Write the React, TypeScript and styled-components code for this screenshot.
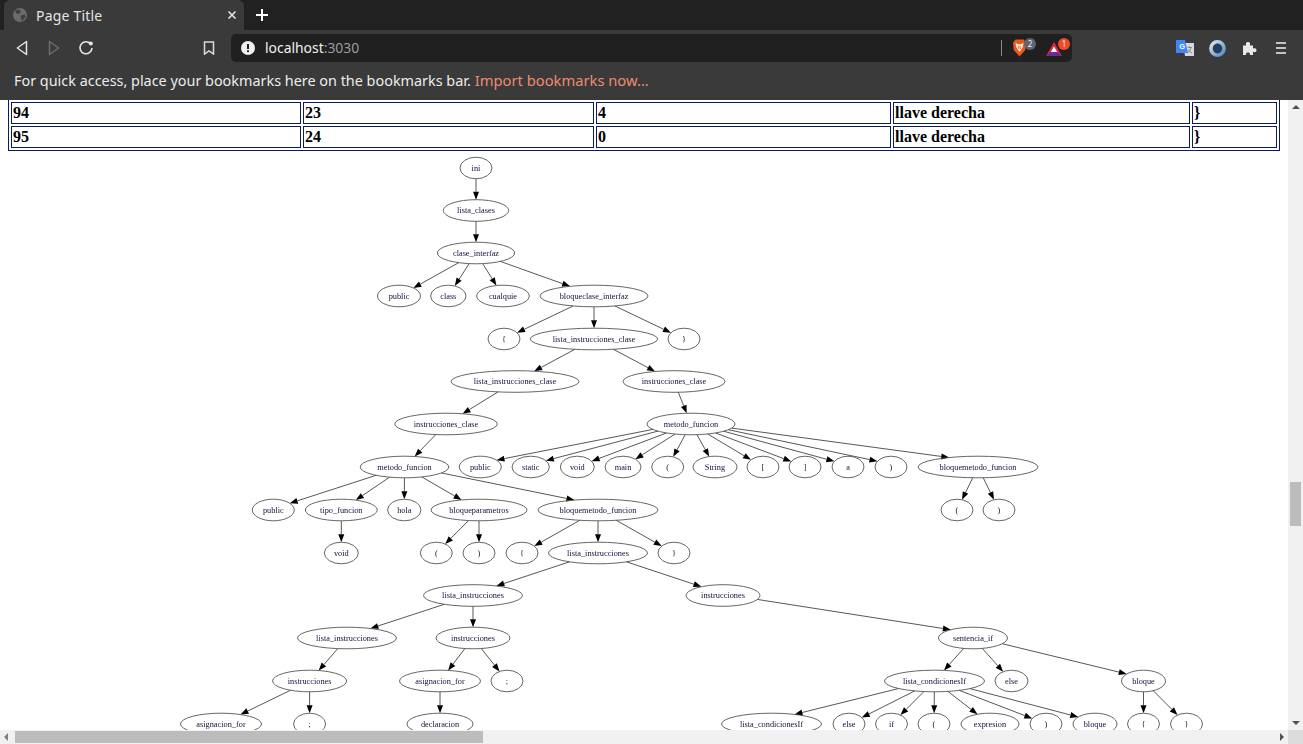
import React from 'react'
import styled, { createGlobalStyle } from 'styled-components'

const GlobalStyle = createGlobalStyle`
  html, body {
    margin: 0;
    height: 744px;
    overflow: hidden;
    background: #fff;
  }
`

const Window = styled.div`
  width: 1303px;
  height: 744px;
  display: flex;
  flex-direction: column;
  font-family: 'Noto Sans', sans-serif;
`

/* browser chrome */
const TabStrip = styled.div`
  height: 30px;
  background: #212121;
  display: flex;
  padding-left: 4px;
`
const Tab = styled.div`
  width: 240px;
  box-sizing: border-box;
  background: #3a3a3a;
  border-radius: 6px 6px 0 0;
  display: flex;
  align-items: center;
  padding: 0 7px 0 8px;
  gap: 8px;
  color: #e4e4e4;
  font-size: 14px;
`
const TabTitle = styled.span`
  flex: 1;
  letter-spacing: 0.2px;
`
const NewTab = styled.div`
  width: 36px;
  display: flex;
  align-items: center;
  justify-content: center;
`
const Toolbar = styled.div`
  height: 36px;
  background: #3a3a3a;
  display: flex;
  align-items: center;
  padding: 0 6px;
`
const ToolButton = styled.div<{ $gapLeft?: number }>`
  width: 32px;
  height: 32px;
  flex: none;
  display: flex;
  align-items: center;
  justify-content: center;
  margin-left: ${p => p.$gapLeft ?? 0}px;
  color: #e6e6e6;
`
const AddressBar = styled.div`
  flex: 1;
  height: 28px;
  margin: 0 97px 0 6px;
  padding-left: 10px;
  background: #202020;
  border-radius: 5px;
  display: flex;
  align-items: center;
  font-size: 13.9px;
`
const Host = styled.span`
  margin-left: 10px;
  padding-bottom: 2px;
  color: #f0f0f0;
`
const Port = styled.span`
  flex: 1;
  padding-bottom: 2px;
  color: #9a9a9a;
`
const Divider = styled.div`
  width: 1px;
  height: 16px;
  background: #8a8a8a;
`
const ShieldSlot = styled.div<{ $width: number }>`
  position: relative;
  width: ${p => p.$width}px;
  height: 28px;
  display: flex;
  align-items: center;
  justify-content: center;
`
const Badge = styled.span<{ $bg: string; $right: number }>`
  position: absolute;
  top: 4px;
  right: ${p => p.$right}px;
  width: 12px;
  height: 12px;
  border-radius: 50%;
  background: ${p => p.$bg};
  color: #eee;
  font-size: 8px;
  line-height: 12px;
  text-align: center;
`
const BookmarksBar = styled.div`
  height: 34px;
  box-sizing: border-box;
  padding: 0 0 6px 14px;
  background: #3a3a3a;
  display: flex;
  align-items: center;
  color: #ececec;
  font-size: 14.4px;
  white-space: nowrap;
`
const ImportLink = styled.span`
  margin-left: 4px;
  color: #ee8b70;
  font-size: 14.72px;
`

/* page */
const Viewport = styled.div`
  height: 644px;
  display: grid;
  grid-template-columns: 1288px 15px;
  grid-template-rows: 630px 14px;
`
const PageArea = styled.div`
  overflow: hidden;
  background: #fff;
`
const TokensTable = styled.table`
  width: 1272px;
  margin: -1px 0 0 8px;
  border: 1px solid #0b1a66;
  border-spacing: 2px;
  border-collapse: separate;
  table-layout: fixed;
  font-family: 'Liberation Serif', serif;
`
const Cell = styled.td`
  height: 22px;
  box-sizing: border-box;
  border: 1px solid #0b1a66;
  padding: 1px;
  font-size: 16px;
  font-weight: bold;
  line-height: 18px;
  color: #000;
`
const Graph = styled.svg`
  display: block;
  filter: blur(0.2px);
`
const NodeShape = styled.ellipse`
  fill: none;
  stroke: #555;
  stroke-width: 0.9;
`
const NodeLabel = styled.text`
  font-family: 'Liberation Serif', serif;
  font-size: 8.3px;
  fill: #10103c;
  text-anchor: middle;
`
const EdgeLine = styled.line`
  stroke: #444;
  stroke-width: 0.9;
`
const EdgeHead = styled.polygon`
  fill: #000;
`
const VerticalTrack = styled.div`
  background: #f1f1f1;
  padding: 382px 2px 0;
  position: relative;
`
const VerticalThumb = styled.div`
  height: 44px;
  background: #bcbcbc;
`
const ArrowUp = styled.div`
  position: absolute;
  left: 4px;
  top: 5px;
  border: 4px solid transparent;
  border-top: 0;
  border-bottom: 4px solid #505050;
`
const ArrowDown = styled.div`
  position: absolute;
  left: 4px;
  bottom: 5px;
  border: 4px solid transparent;
  border-bottom: 0;
  border-top: 4px solid #505050;
`
const HorizontalTrack = styled.div`
  background: #f1f1f1;
  padding: 1px 0 1px 15px;
  position: relative;
`
const HorizontalThumb = styled.div`
  width: 468px;
  height: 12px;
  background: #bcbcbc;
`
const ArrowLeft = styled.div`
  position: absolute;
  left: 4px;
  top: 3px;
  border: 4px solid transparent;
  border-left: 0;
  border-right: 4px solid #808080;
`
const ArrowRight = styled.div`
  position: absolute;
  right: 4px;
  top: 3px;
  border: 4px solid transparent;
  border-right: 0;
  border-left: 4px solid #505050;
`
const Corner = styled.div`
  background: #dcdcdc;
`

const rows = [
  ['94', '23', '4', 'llave derecha', '}'],
  ['95', '24', '0', 'llave derecha', '}'],
]
const colWidths = [290, 291, 295, 297, 85]

type TreeNode = { label: string; x: number; rx: number; kids?: TreeNode[] }

const n = (label: string, x: number, rx: number, kids?: TreeNode[]): TreeNode => ({ label, x, rx, kids })

// y of each depth level of the parse tree
const levels = [168, 210.5, 253, 296, 339, 381.5, 424, 467, 510, 553, 595.5, 638, 681, 724]

const tree = n('ini', 476, 16, [
  n('lista_clases', 476, 32.7, [
    n('clase_interfaz', 476, 38.7, [
      n('public', 399, 21.5),
      n('class', 448.3, 17.7),
      n('cualquie', 503, 26.3),
      n('bloqueclase_interfaz', 594, 54, [
        n('{', 504, 16),
        n('lista_instrucciones_clase', 594, 63.7, [
          n('lista_instrucciones_clase', 515, 64, [
            n('instrucciones_clase', 446, 51.3, [
              n('metodo_funcion', 404.5, 44.3, [
                n('public', 273.3, 21),
                n('tipo_funcion', 341.3, 36, [n('void', 341.3, 17)]),
                n('hola', 404.3, 16.7),
                n('bloqueparametros', 479, 48, [n('(', 436.3, 16), n(')', 479, 16)]),
                n('bloquemetodo_funcion', 598, 60, [
                  n('{', 522, 16),
                  n('lista_instrucciones', 598, 49.5, [
                    n('lista_instrucciones', 473, 49.5, [
                      n('lista_instrucciones', 347, 49.5, [
                        n('instrucciones', 309.6, 37, [
                          n('asignacion_for', 221, 40.5),
                          n(';', 309.6, 16),
                        ]),
                      ]),
                      n('instrucciones', 473, 37, [
                        n('asignacion_for', 440, 40.5, [n('declaracion', 440, 33)]),
                        n(';', 507, 16),
                      ]),
                    ]),
                    n('instrucciones', 723, 37, [
                      n('sentencia_if', 973, 34.5, [
                        n('lista_condicionesIf', 934.5, 50, [
                          n('lista_condicionesIf', 771.5, 50),
                          n('else', 849, 16),
                          n('if', 891.5, 16),
                          n('(', 934, 16),
                          n('expresion', 990, 29),
                          n(')', 1046, 16),
                          n('bloque', 1095, 22),
                        ]),
                        n('else', 1011.5, 16.5),
                        n('bloque', 1143.5, 22, [n('{', 1143.5, 16), n('}', 1186.5, 16)]),
                      ]),
                    ]),
                  ]),
                  n('}', 674, 16),
                ]),
              ]),
            ]),
          ]),
          n('instrucciones_clase', 674, 51, [
            n('metodo_funcion', 691, 44, [
              n('public', 480.3, 21),
              n('static', 530.7, 18.7),
              n('void', 577.3, 17),
              n('main', 623, 18),
              n('(', 667.7, 16),
              n('String', 715, 22),
              n('[', 763, 16),
              n(']', 805, 16),
              n('a', 848, 16),
              n(')', 891, 16),
              n('bloquemetodo_funcion', 978, 60, [n('(', 957, 16), n(')', 999, 16)]),
            ]),
          ]),
        ]),
        n('}', 684, 16),
      ]),
    ]),
  ]),
])

type PlacedNode = { node: TreeNode; y: number }
type PlacedEdge = { from: PlacedNode; to: PlacedNode }

function flatten(node: TreeNode, depth: number, nodes: PlacedNode[], edges: PlacedEdge[]) {
  const placed = { node, y: levels[depth] }
  nodes.push(placed)
  ;(node.kids ?? []).forEach(kid => {
    edges.push({ from: placed, to: { node: kid, y: levels[depth + 1] } })
    flatten(kid, depth + 1, nodes, edges)
  })
}

const placedNodes: PlacedNode[] = []
const placedEdges: PlacedEdge[] = []
flatten(tree, 0, placedNodes, placedEdges)

const RY = 10.8

// flat edges in the dot output bend, so they leave wide and land near the top of the node
function edgeEnds({ from, to }: PlacedEdge) {
  const dx = to.node.x - from.node.x
  const dy = to.y - from.y
  const slope = Math.abs(dx) / dy
  const k = Math.min(2.2, Math.max(1, 1 + (slope - 2.5) * 0.45))
  const dyIn = dy * k
  const dyOut = dy / Math.sqrt(k)
  const tOut = 1 / Math.sqrt((dx * dx) / (from.node.rx * from.node.rx) + (dyOut * dyOut) / (RY * RY))
  const tIn = 1 / Math.sqrt((dx * dx) / (to.node.rx * to.node.rx) + (dyIn * dyIn) / (RY * RY))
  return {
    x1: from.node.x + dx * tOut,
    y1: from.y + dyOut * tOut,
    x2: to.node.x - dx * tIn,
    y2: to.y - dyIn * tIn,
  }
}

function Arrow({ edge }: { edge: PlacedEdge }) {
  const { x1, y1, x2, y2 } = edgeEnds(edge)
  const len = Math.hypot(x2 - x1, y2 - y1)
  const ux = (x2 - x1) / len
  const uy = (y2 - y1) / len
  const bx = x2 - ux * 8
  const by = y2 - uy * 8
  const head = `${x2},${y2} ${bx - uy * 3},${by + ux * 3} ${bx + uy * 3},${by - ux * 3}`
  return (
    <>
      <EdgeLine x1={x1} y1={y1} x2={bx} y2={by} />
      <EdgeHead points={head} />
    </>
  )
}

export default function App() {
  return (
    <Window>
      <GlobalStyle />
      <TabStrip>
        <Tab>
          <svg width="16" height="16" viewBox="0 0 16 16">
            <circle cx="8" cy="8" r="7" fill="#6b6b6b" />
            <path d="M3 3.5 L7 2.5 L9 4.5 L7 7 L4.5 6.5 Z M8.5 8.5 L13 7.5 L13.5 10 L10 14 L9 11 Z" fill="#3e3e3e" />
          </svg>
          <TabTitle>Page Title</TabTitle>
          <svg width="10" height="10" viewBox="0 0 10 10">
            <path d="M1.5 1.5 L8.5 8.5 M8.5 1.5 L1.5 8.5" stroke="#e0e0e0" strokeWidth="1.7" />
          </svg>
        </Tab>
        <NewTab>
          <svg width="14" height="14" viewBox="0 0 14 14">
            <path d="M7 1 V13 M1 7 H13" stroke="#fff" strokeWidth="2" />
          </svg>
        </NewTab>
      </TabStrip>

      <Toolbar>
        <ToolButton>
          <svg width="12" height="16" viewBox="0 0 12 16">
            <path d="M10.5 1.5 V14.5 L1.3 8 Z" fill="none" stroke="#e6e6e6" strokeWidth="1.5" strokeLinejoin="round" />
          </svg>
        </ToolButton>
        <ToolButton>
          <svg width="12" height="16" viewBox="0 0 12 16">
            <path d="M1.5 1.5 V14.5 L10.7 8 Z" fill="none" stroke="#6e6e6e" strokeWidth="1.5" strokeLinejoin="round" />
          </svg>
        </ToolButton>
        <ToolButton>
          <svg width="16" height="16" viewBox="0 0 16 16">
            <path d="M12.6 3.9 A6 6 0 1 0 14 8" fill="none" stroke="#e6e6e6" strokeWidth="1.6" />
            <circle cx="12.8" cy="3.4" r="2" fill="#e6e6e6" />
          </svg>
        </ToolButton>
        <ToolButton $gapLeft={91}>
          <svg width="12" height="14" viewBox="0 0 12 14">
            <path d="M1.5 1 H10.5 V13 L6 9.8 L1.5 13 Z" fill="none" stroke="#dcdcdc" strokeWidth="1.5" />
          </svg>
        </ToolButton>
        <AddressBar>
          <svg width="14" height="14" viewBox="0 0 14 14">
            <circle cx="7" cy="7" r="7" fill="#f0f0f0" />
            <path d="M6 3 H8 V8 H6 Z M6 9.3 H8 V11 H6 Z" fill="#202020" />
          </svg>
          <Host>localhost</Host>
          <Port>:3030</Port>
          <Divider />
          <ShieldSlot $width={37}>
            <svg width="15" height="18" viewBox="0 0 14 18" style={{ marginRight: 2 }}>
              <path d="M3 0.5 H11 L13.5 3.5 L12.8 11 L7 17.5 L1.2 11 L0.5 3.5 Z" fill="#e8591c" />
              <path d="M3 4 L6 5.3 H8 L11 4 L10.2 8.3 L8 11.7 L7 12.7 L6 11.7 L3.8 8.3 Z" fill="#fbe6da" />
              <path d="M6.2 6.8 V10 M7.8 6.8 V10" stroke="#e8591c" strokeWidth="0.8" />
            </svg>
            <Badge $bg="#60646f" $right={3}>2</Badge>
          </ShieldSlot>
          <ShieldSlot $width={33}>
            <svg width="18" height="14" viewBox="0 0 18 16" style={{ marginRight: 3, marginTop: 2 }}>
              <path d="M9 0 L18 16 H0 Z" fill="#e0283c" />
              <path d="M4.6 11.5 H13.4 L18 16 H0 Z" fill="#662d91" />
              <path d="M9 5 L12.6 11.5 H5.4 Z" fill="#fff" />
            </svg>
            <Badge $bg="#f04a28" $right={2}>1</Badge>
          </ShieldSlot>
        </AddressBar>
        <ToolButton>
          <svg width="18" height="16" viewBox="0 0 18 16">
            <path d="M7 3 H18 V16 H9 Z" fill="#d9d9d9" />
            <path d="M11.5 7.5 H16 M13.5 6.3 V7.5 M15 7.5 C14.6 10 13 12 11.5 13 M12.5 9.5 C13 11 14.4 12.3 16 13" fill="none" stroke="#777" strokeWidth="0.8" />
            <path d="M0 0 H9 L12 13 H0 Z" fill="#4285f4" />
            <text x="3.2" y="9" fontSize="7.5" fontFamily="'Liberation Sans', sans-serif" fontWeight="bold" fill="#fff">G</text>
          </svg>
        </ToolButton>
        <ToolButton>
          <svg width="17" height="17" viewBox="0 0 16 16">
            <defs>
              <linearGradient id="ringFill" x1="0" y1="0" x2="1" y2="1">
                <stop offset="0" stopColor="#d7e6f2" />
                <stop offset="1" stopColor="#4f8ec4" />
              </linearGradient>
            </defs>
            <circle cx="8" cy="8" r="6.2" fill="none" stroke="url(#ringFill)" strokeWidth="3.4" />
            <ellipse cx="8" cy="8" rx="2.5" ry="4.6" fill="#1f3f66" />
          </svg>
        </ToolButton>
        <ToolButton>
          <svg width="15" height="15" viewBox="0 0 15 15">
            <path
              d="M1 4.5 H4.2 C3.6 3.6 3.6 1 6 1 C8.4 1 8.4 3.6 7.8 4.5 H11 V7.6 C12 7 14.5 7 14.5 9.2 C14.5 11.4 12 11.4 11 10.8 V14 H7.8 C8.3 13 8.2 11.4 6 11.4 C3.8 11.4 3.7 13 4.2 14 H1 Z"
              fill="#e8e8e8"
            />
          </svg>
        </ToolButton>
        <ToolButton>
          <svg width="10" height="12" viewBox="0 0 10 12">
            <path d="M0 1 H10 M0 6 H10 M0 11 H10" stroke="#c4c4c4" strokeWidth="2" />
          </svg>
        </ToolButton>
      </Toolbar>

      <BookmarksBar>
        For quick access, place your bookmarks here on the bookmarks bar.
        <ImportLink>Import bookmarks now...</ImportLink>
      </BookmarksBar>

      <Viewport>
        <PageArea>
          <TokensTable>
            <colgroup>
              {colWidths.map((w, i) => (
                <col key={i} width={w} />
              ))}
            </colgroup>
            <tbody>
              {rows.map((row, r) => (
                <tr key={r}>
                  {row.map((value, c) => (
                    <Cell key={c}>{value}</Cell>
                  ))}
                </tr>
              ))}
            </tbody>
          </TokensTable>
          <Graph width="1288" height="579" viewBox="0 151 1288 579">
            {placedEdges.map((edge, i) => (
              <Arrow key={i} edge={edge} />
            ))}
            {placedNodes.map(({ node, y }, i) => (
              <React.Fragment key={i}>
                <NodeShape cx={node.x} cy={y} rx={node.rx} ry={RY} />
                <NodeLabel x={node.x} y={y + 2.6}>{node.label}</NodeLabel>
              </React.Fragment>
            ))}
          </Graph>
        </PageArea>
        <VerticalTrack>
          <ArrowUp />
          <VerticalThumb />
          <ArrowDown />
        </VerticalTrack>
        <HorizontalTrack>
          <ArrowLeft />
          <HorizontalThumb />
          <ArrowRight />
        </HorizontalTrack>
        <Corner />
      </Viewport>
    </Window>
  )
}
